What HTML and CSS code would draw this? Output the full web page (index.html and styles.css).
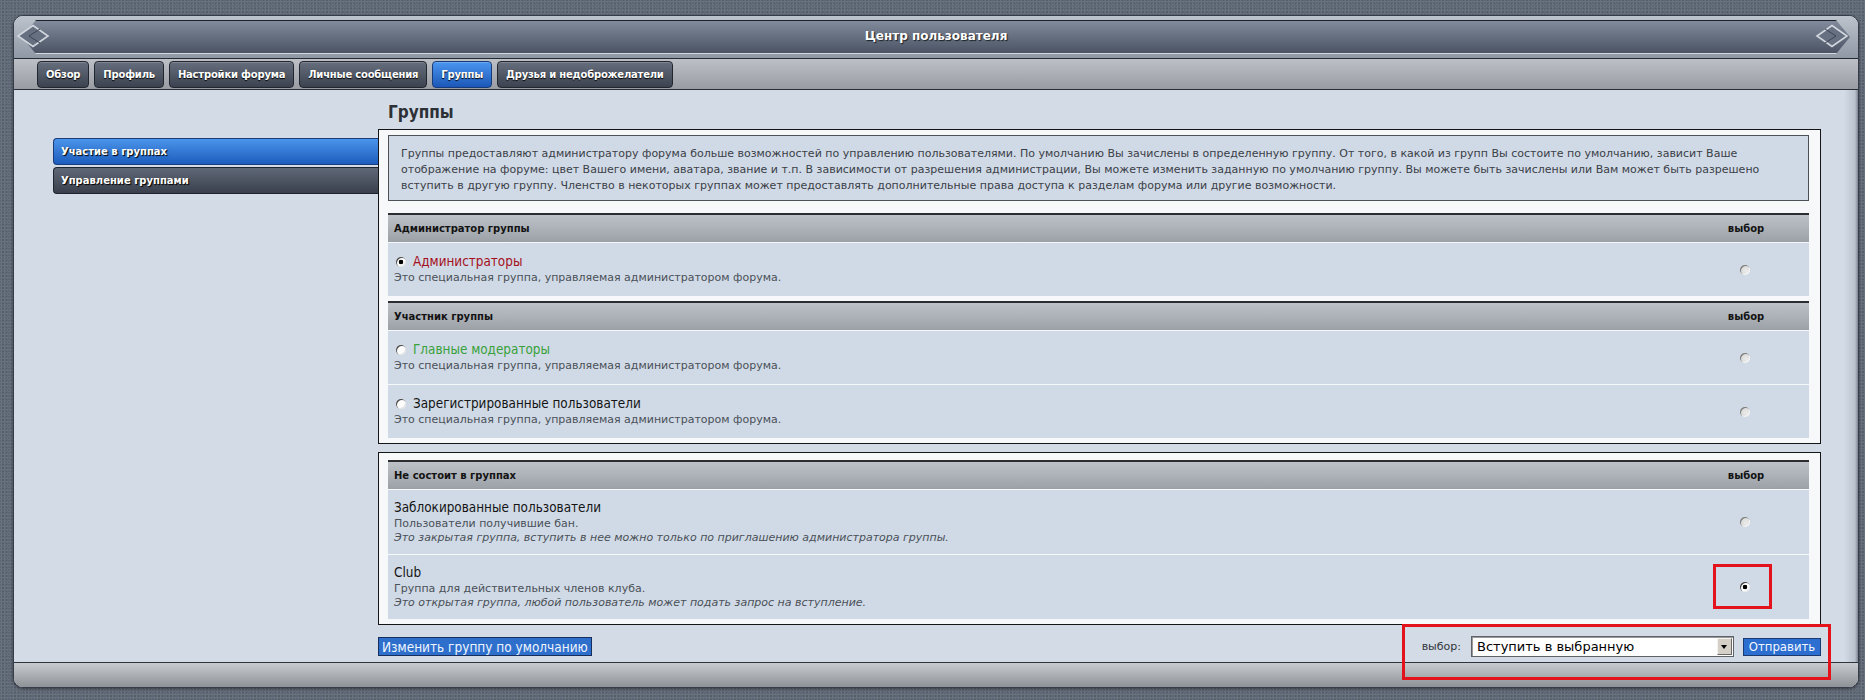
FILE: index.html
```html
<!DOCTYPE html>
<html lang="ru">
<head>
<meta charset="utf-8">
<title>Центр пользователя</title>
<link rel="stylesheet" href="styles.css">
</head>
<body>
<div class="frame">
  <div class="frame-top">
    <div class="band"><h1 class="title">Центр пользователя</h1></div>
    <svg class="diamond diamond-left" width="34" height="24" viewBox="0 0 34 24"><polygon points="2,12 17,1.5 32,12 17,22.5" fill="#667080" stroke="#d2d7de" stroke-width="1.6"/><polyline points="24,5 13,12 24,19" fill="none" stroke="#3d4452" stroke-width="1"/></svg>
    <svg class="diamond diamond-right" width="34" height="24" viewBox="0 0 34 24"><polygon points="2,12 17,1.5 32,12 17,22.5" fill="#667080" stroke="#d2d7de" stroke-width="1.6"/><polyline points="10,5 21,12 10,19" fill="none" stroke="#3d4452" stroke-width="1"/></svg>
  </div>
  <nav class="tabs">
    <span class="tab">Обзор</span>
    <span class="tab">Профиль</span>
    <span class="tab">Настройки форума</span>
    <span class="tab">Личные сообщения</span>
    <span class="tab active">Группы</span>
    <span class="tab">Друзья и недоброжелатели</span>
  </nav>
  <div class="content">
    <aside class="side">
      <div class="side-item active">Участие в группах</div>
      <div class="side-item">Управление группами</div>
    </aside>
    <main class="main">
      <h2 class="page-title">Группы</h2>
      <section class="panel">
        <div class="intro">Группы предоставляют администратору форума больше возможностей по управлению пользователями. По умолчанию Вы зачислены в определенную группу. От того, в какой из групп Вы состоите по умолчанию, зависит Ваше<br>отображение на форуме: цвет Вашего имени, аватара, звание и т.п. В зависимости от разрешения администрации, Вы можете изменить заданную по умолчанию группу. Вы можете быть зачислены или Вам может быть разрешено<br>вступить в другую группу. Членство в некоторых группах может предоставлять дополнительные права доступа к разделам форума или другие возможности.</div>
        <div class="ghead"><span class="gh-name">Администратор группы</span><span class="gh-pick">выбор</span></div>
        <div class="grow">
          <div class="gcell radio-row">
            <div class="gname admin"><input type="radio" class="rb" name="def" checked>Администраторы</div>
            <div class="gdesc">Это специальная группа, управляемая администратором форума.</div>
          </div>
          <div class="gpick"><input type="radio" class="rb pick" name="sel"></div>
        </div>
        <div class="ghead sep"><span class="gh-name">Участник группы</span><span class="gh-pick">выбор</span></div>
        <div class="grow">
          <div class="gcell radio-row">
            <div class="gname mods"><input type="radio" class="rb" name="def">Главные модераторы</div>
            <div class="gdesc">Это специальная группа, управляемая администратором форума.</div>
          </div>
          <div class="gpick"><input type="radio" class="rb pick" name="sel"></div>
        </div>
        <div class="grow">
          <div class="gcell radio-row">
            <div class="gname"><input type="radio" class="rb" name="def">Зарегистрированные пользователи</div>
            <div class="gdesc">Это специальная группа, управляемая администратором форума.</div>
          </div>
          <div class="gpick"><input type="radio" class="rb pick" name="sel"></div>
        </div>
      </section>
      <section class="panel second">
        <div class="ghead"><span class="gh-name">Не состоит в группах</span><span class="gh-pick">выбор</span></div>
        <div class="grow">
          <div class="gcell">
            <div class="gname">Заблокированные пользователи</div>
            <div class="gdesc">Пользователи получившие бан.</div>
            <div class="gdesc note">Это закрытая группа, вступить в нее можно только по приглашению администратора группы.</div>
          </div>
          <div class="gpick"><input type="radio" class="rb pick" name="sel"></div>
        </div>
        <div class="grow">
          <div class="gcell">
            <div class="gname">Club</div>
            <div class="gdesc">Группа для действительных членов клуба.</div>
            <div class="gdesc note">Это открытая группа, любой пользователь может подать запрос на вступление.</div>
          </div>
          <div class="gpick"><input type="radio" class="rb pick on" name="sel" checked></div>
        </div>
      </section>
      <div class="actions">
        <button class="btn" type="button">Изменить группу по умолчанию</button>
        <div class="action-right">
          <span class="act-label">выбор:</span>
          <span class="select-wrap">
            <select class="select"><option>Вступить в выбранную</option></select>
            <span class="select-arrow"></span>
          </span>
          <button class="btn submit" type="button">Отправить</button>
        </div>
      </div>
    </main>
  </div>
  <div class="frame-bottom"></div>
</div>
<div class="mark mark-radio"></div>
<div class="mark mark-actions"></div>
</body>
</html>
```
FILE: styles.css
```css
html, body {
  margin: 0;
  padding: 0;
}
body {
  width: 1865px;
  height: 700px;
  overflow: hidden;
  position: relative;
  background-color: #5d6674;
  background-image:
    radial-gradient(rgba(255,255,255,0.07) 1px, transparent 1.2px),
    radial-gradient(rgba(0,0,0,0.10) 1px, transparent 1.2px);
  background-size: 3px 3px, 4px 4px;
  background-position: 0 0, 1px 2px;
  font-family: "DejaVu Sans", Verdana, sans-serif;
}

.frame {
  box-sizing: border-box;
  width: 1846px;
  margin: 15px 0 0 13px;
  border: 1px solid #363c48;
  border-radius: 10px;
  overflow: hidden;
  background: #d3dce6;
  box-shadow: 0 1px 3px rgba(0,0,0,0.45);
}

/* header */
.frame-top {
  position: relative;
  padding: 4px 8px 4px;
  background: linear-gradient(#bcc3cc, #8f98a5);
  border-bottom: 1px solid #262b33;
}
.band {
  height: 32px;
  border-top: 1px solid #1d222a;
  border-bottom: 1px solid #d3d8df;
  background: linear-gradient(#818b9b, #4b5364);
  clip-path: polygon(14px 0, calc(100% - 14px) 0, 100% 50%, calc(100% - 14px) 100%, 14px 100%, 0 50%);
}
.title {
  margin: 0;
  font: bold 12px/31px "DejaVu Sans", Verdana, sans-serif;
  color: #fff;
  text-align: center;
  text-shadow: 1px 1px 1px #1c2027;
}
.diamond {
  position: absolute;
  top: 8px;
}
.diamond-left { left: 2px; }
.diamond-right { right: 9px; }

/* tabs */
.tabs {
  box-sizing: border-box;
  height: 31px;
  display: flex;
  gap: 5px;
  padding: 2px 0 0 23px;
  background: linear-gradient(#bdc1c7, #999da3);
  border-bottom: 1px solid #2a2e36;
}
.tab {
  box-sizing: border-box;
  height: 27px;
  padding: 0 8px;
  display: flex;
  align-items: center;
  border: 1px solid #22262e;
  border-radius: 4px;
  background: linear-gradient(#666e7d, #3c424f);
  box-shadow: inset 0 1px 0 rgba(255,255,255,0.18);
  color: #fff;
  font: bold 10px "DejaVu Sans", Verdana, sans-serif;
  letter-spacing: -0.2px;
  text-shadow: 0 1px 1px #000;
}
.tab.active {
  background: linear-gradient(#4b96ef, #1b57b7);
  border-color: #173b7a;
}

/* content */
.content {
  display: flex;
  padding: 0 37px 5px 39px;
  background: linear-gradient(to right, #d3dce6 0, #d3dce6 calc(100% - 14px), #b9c2cd calc(100% - 3px), #7d8592 100%);
}
.side {
  width: 325px;
  flex: none;
  padding-top: 48px;
  display: flex;
  flex-direction: column;
  gap: 2px;
}
.side-item {
  box-sizing: border-box;
  height: 27px;
  padding-left: 7px;
  display: flex;
  align-items: center;
  border: 1px solid #1f2530;
  border-right: none;
  border-radius: 4px 0 0 4px;
  background: linear-gradient(#5f6878, #3a404c);
  color: #fff;
  font: bold 10px "DejaVu Sans", Verdana, sans-serif;
  text-shadow: 1px 1px 1px #000;
}
.side-item.active {
  background: linear-gradient(#4b94ea, #1c5dbd);
  border-color: #193d7c;
}

.main {
  width: 1443px;
  flex: none;
}
.page-title {
  margin: 12px 0 7px 10px;
  font: bold 17px/20px "DejaVu Sans Condensed", "Liberation Sans Narrow", "DejaVu Sans", sans-serif;
  color: #2d3137;
}

.panel {
  box-sizing: border-box;
  background: #f6f8fa;
  border: 1px solid #151515;
  padding: 5px 11px 5px 9px;
}
.panel.second {
  margin-top: 8px;
  padding-top: 7px;
}
.intro {
  border: 1px solid #4c5157;
  background: #d0dae6;
  padding: 10px 10px 6px 12px;
  margin-bottom: 12px;
  font-size: 11px;
  line-height: 16px;
  color: #3b4046;
}
.ghead {
  box-sizing: border-box;
  height: 29px;
  display: flex;
  align-items: center;
  border-top: 2px solid #2b2d31;
  background: linear-gradient(#bdc2c8, #9ca1a7);
  font: bold 10px "DejaVu Sans", Verdana, sans-serif;
  color: #131313;
}
.ghead.sep { margin-top: 5px; }
.gh-name { flex: 1; padding-left: 6px; }
.gh-pick { width: 126px; text-align: center; }

.grow {
  display: flex;
  margin-top: 1px;
  background: #d0dae6;
}
.gcell {
  flex: 1;
  padding: 9px 6px 9px;
}
.gcell.radio-row { padding: 10px 6px 11px; }
.gpick {
  width: 126px;
  display: flex;
  align-items: center;
  justify-content: center;
}
.gname {
  display: flex;
  align-items: center;
  height: 18px;
  font: 13.4px/18px "DejaVu Sans Condensed", "Liberation Sans Narrow", "DejaVu Sans", sans-serif;
  color: #141414;
}
.gname.admin { color: #a50f1c; }
.gname.mods { color: #38a13a; }
.gdesc {
  font-size: 11px;
  line-height: 14px;
  color: #4a5057;
}
.gdesc.note { font-style: italic; }

.rb {
  appearance: none;
  -webkit-appearance: none;
  box-sizing: border-box;
  width: 10px;
  height: 10px;
  margin: 0 7px 0 2px;
  border-radius: 50%;
  background: #fdfdfd;
  box-shadow: inset 1px 1px 0 #4a4a4a, inset -1px -1px 0 #e2e2e2;
  flex: none;
}
.rb:checked {
  background: radial-gradient(circle, #000 0, #000 2px, #fdfdfd 2.6px);
}
.rb.pick {
  margin: 0 3px 0 0;
  background: radial-gradient(circle at 60% 60%, #ececec, #cfcfcf);
  box-shadow: inset 1px 1px 0 #7d7d7d, inset -1px -1px 0 #f4f4f4;
}
.rb.pick.on {
  background: radial-gradient(circle, #000 0, #000 2px, #fdfdfd 2.6px);
  box-shadow: inset 1px 1px 0 #3c3c3c, inset -1px -1px 0 #e8e8e8;
}

/* actions */
.actions {
  display: flex;
  align-items: center;
  height: 21px;
  margin-top: 11px;
}
.btn {
  box-sizing: border-box;
  height: 19px;
  margin: 0;
  padding: 0 3px;
  border: 1px solid #172f5c;
  background: #2f6fcc;
  color: #eef5ff;
  font: 13.5px/16px "DejaVu Sans Condensed", "Liberation Sans Narrow", "DejaVu Sans", sans-serif;
  cursor: pointer;
}
.action-right {
  margin-left: auto;
  display: flex;
  align-items: center;
}
.act-label {
  font-size: 11px;
  color: #30353b;
  margin-right: 10px;
}
.select-wrap {
  position: relative;
  display: block;
  width: 263px;
  height: 21px;
}
.select {
  appearance: none;
  -webkit-appearance: none;
  box-sizing: border-box;
  width: 100%;
  height: 21px;
  margin: 0;
  padding: 0 0 0 5px;
  border: 1px solid #5f6368;
  border-radius: 0;
  box-shadow: inset 1px 1px 0 #9a9a9a;
  background: #fff;
  color: #000;
  font: 13px/19px "DejaVu Sans", Verdana, sans-serif;
}
.select-arrow {
  position: absolute;
  top: 2px;
  right: 2px;
  width: 15px;
  height: 17px;
  box-sizing: border-box;
  background: #d4d0c8;
  border: 1px solid;
  border-color: #f4f3ef #6a6864 #6a6864 #f4f3ef;
}
.select-arrow::after {
  content: "";
  position: absolute;
  left: 3px;
  top: 6px;
  border-left: 3.5px solid transparent;
  border-right: 3.5px solid transparent;
  border-top: 4px solid #000;
}
.btn.submit {
  margin-left: 9px;
  width: 78px;
  height: 18px;
  padding: 0;
  border-color: #1b3a70;
  background: #2c6fd1;
  color: #f2f7ff;
  font-size: 13px;
  line-height: 15px;
}

.frame-bottom {
  height: 24px;
  border-top: 1px solid #2e333c;
  background: linear-gradient(#c8ccd1, #8e9297);
}

/* red annotation frames drawn over the screenshot */
.mark {
  position: absolute;
  box-sizing: border-box;
  border: 3px solid #e3121b;
}
.mark-radio {
  left: 1713px;
  top: 564px;
  width: 59px;
  height: 45px;
}
.mark-actions {
  left: 1402px;
  top: 624px;
  width: 429px;
  height: 56px;
}
```
